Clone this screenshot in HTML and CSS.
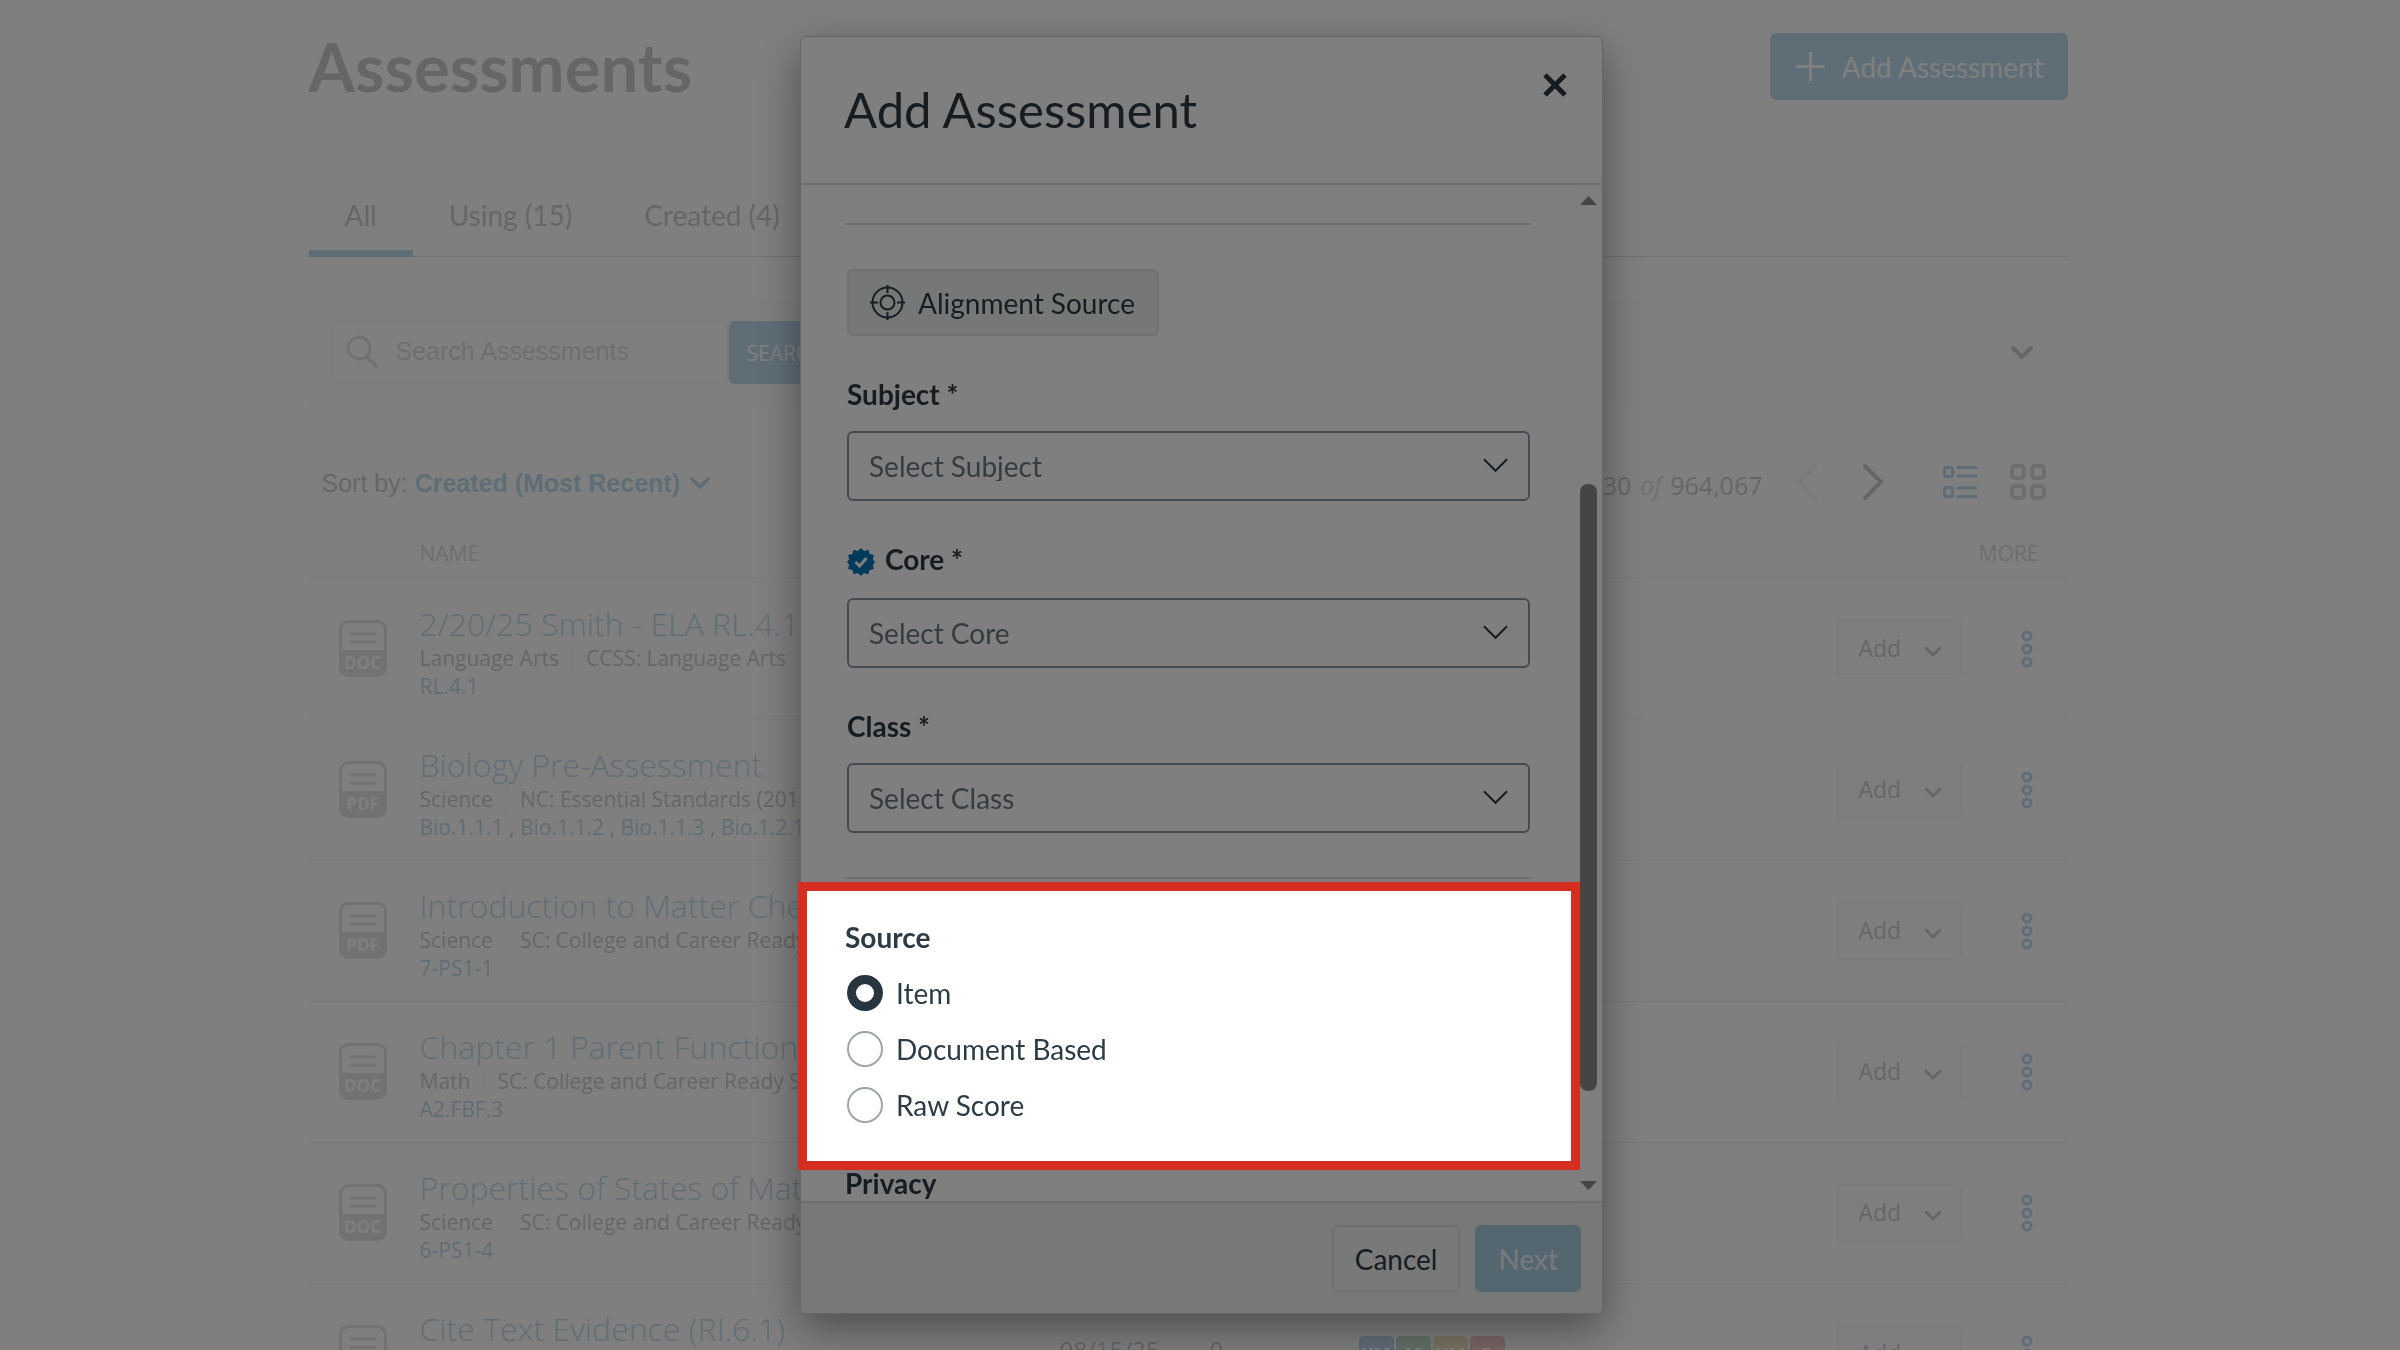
FILE: index.html
```html
<!DOCTYPE html>
<html lang="en">
<head>
<meta charset="utf-8">
<title>Assessments</title>
<link rel="stylesheet" href="styles.css">
</head>
<body>
<svg class="sprite" aria-hidden="true">
  <symbol id="doc" viewBox="0 0 48 57"><rect x="1.5" y="1.5" width="45" height="54" rx="8" fill="none" stroke="#8b9298" stroke-width="3"/><path d="M2 30h44v17a8 8 0 0 1-8 8H10a8 8 0 0 1-8-8z" fill="#8b9298"/><path d="M12 14h24M12 22h24" stroke="#8b9298" stroke-width="3" stroke-linecap="round"/></symbol>
  <symbol id="chev" viewBox="0 0 24 16"><path d="M3 3l9 9 9-9" fill="none" stroke="currentColor" stroke-width="4" stroke-linecap="round" stroke-linejoin="round"/></symbol>
  <symbol id="chev-thin" viewBox="0 0 26 15"><path d="M1 1l12 12L25 1" fill="none" stroke="currentColor" stroke-width="2"/></symbol>
  <symbol id="dots" viewBox="0 0 12 38"><g fill="none" stroke="currentColor" stroke-width="3"><circle cx="6" cy="6" r="4"/><circle cx="6" cy="19" r="4"/><circle cx="6" cy="32" r="4"/></g></symbol>
</svg>

<main class="page">
  <header class="page-head">
    <h1>Assessments</h1>
    <button class="btn-primary" type="button"><svg width="29" height="29" viewBox="0 0 29 29"><path d="M14.500 1v27M1 14.500h27" stroke="currentColor" stroke-width="3" stroke-linecap="round"/></svg>Add Assessment</button>
  </header>

  <nav class="tabs">
    <a class="tab active" href="#all">All</a>
    <a class="tab" href="#using">Using (15)</a>
    <a class="tab" href="#created">Created (4)</a>
  </nav>

  <section class="filter">
    <form class="search">
      <label class="search-box">
        <svg width="33" height="34" viewBox="0 0 33 34"><g fill="none" stroke="currentColor" stroke-width="3" stroke-linecap="round"><circle cx="13" cy="13" r="11"/><path d="M21 22l9 9" stroke-width="4"/></g></svg>
        <input type="text" placeholder="Search Assessments" aria-label="Search Assessments">
      </label>
      <button class="search-btn" type="button">SEARCH</button>
    </form>
    <button class="plain" type="button" aria-label="Expand"><svg width="24" height="16"><use href="#chev"/></svg></button>
  </section>

  <div class="toolbar">
    <div class="sort"><span>Sort by:</span> <button class="plain sort-btn" type="button">Created (Most Recent) <svg width="22" height="15"><use href="#chev"/></svg></button></div>
    <div class="pager">
      <span class="count">30 <em>of</em> 964,067</span>
      <button class="plain prev" type="button" aria-label="Previous"><svg width="22" height="38" viewBox="0 0 22 38"><path d="M20 2L3 19l17 17" fill="none" stroke="currentColor" stroke-width="3" stroke-linecap="round"/></svg></button>
      <button class="plain next" type="button" aria-label="Next page"><svg width="22" height="38" viewBox="0 0 22 38"><path d="M3 3l16 16L3 35" fill="none" stroke="currentColor" stroke-width="4" stroke-linecap="round" stroke-linejoin="round"/></svg></button>
      <button class="plain list" type="button" aria-label="List view"><svg width="36" height="34" viewBox="0 0 36 34"><g fill="none" stroke="currentColor" stroke-width="3" stroke-linecap="round"><rect x="2.500" y="2.500" width="8" height="9" rx="2"/><rect x="2.500" y="22.500" width="8" height="9" rx="2"/><path d="M16 2.500h18M16 11h18M16 23h18M16 31.500h18"/></g></svg></button>
      <button class="plain grid" type="button" aria-label="Grid view"><svg width="36" height="36" viewBox="0 0 36 36"><g fill="none" stroke="currentColor" stroke-width="4"><rect x="2" y="2" width="12" height="12" rx="3"/><rect x="22" y="2" width="12" height="12" rx="3"/><rect x="2" y="22" width="12" height="12" rx="3"/><rect x="22" y="22" width="12" height="12" rx="3"/></g></svg></button>
    </div>
  </div>

  <table class="list-table">
    <colgroup><col class="c-icon"><col class="c-name"><col class="c-date"><col class="c-num"><col class="c-score"><col class="c-add"><col class="c-more"></colgroup>
    <thead><tr><th></th><th>NAME</th><th></th><th></th><th></th><th></th><th>MORE</th></tr></thead>
    <tbody>
      <tr>
        <td class="icon"><span class="doc"><svg width="48" height="57"><use href="#doc"/></svg><b>DOC</b></span></td>
        <td class="name"><a class="title" href="#1">2/20/25 Smith - ELA RL.4.1</a><div class="meta"><span>Language Arts</span><span>CCSS: Language Arts</span></div><div class="std"><a href="#s">RL.4.1</a></div></td>
        <td></td><td></td><td></td>
        <td><button class="add" type="button">Add <svg width="18" height="12"><use href="#chev"/></svg></button></td>
        <td class="more"><button class="plain" type="button" aria-label="More"><svg width="12" height="38"><use href="#dots"/></svg></button></td>
      </tr>
      <tr>
        <td class="icon"><span class="doc"><svg width="48" height="57"><use href="#doc"/></svg><b>PDF</b></span></td>
        <td class="name"><a class="title" href="#2">Biology Pre-Assessment</a><div class="meta"><span>Science</span><span>NC: Essential Standards (2010)</span></div><div class="std"><a href="#s">Bio.1.1.1</a> , <a href="#s">Bio.1.1.2</a> , <a href="#s">Bio.1.1.3</a> , <a href="#s">Bio.1.2.1</a></div></td>
        <td></td><td></td><td></td>
        <td><button class="add" type="button">Add <svg width="18" height="12"><use href="#chev"/></svg></button></td>
        <td class="more"><button class="plain" type="button" aria-label="More"><svg width="12" height="38"><use href="#dots"/></svg></button></td>
      </tr>
      <tr>
        <td class="icon"><span class="doc"><svg width="48" height="57"><use href="#doc"/></svg><b>PDF</b></span></td>
        <td class="name"><a class="title" href="#3">Introduction to Matter Check</a><div class="meta"><span>Science</span><span>SC: College and Career Ready</span></div><div class="std"><a href="#s">7-PS1-1</a></div></td>
        <td></td><td></td><td></td>
        <td><button class="add" type="button">Add <svg width="18" height="12"><use href="#chev"/></svg></button></td>
        <td class="more"><button class="plain" type="button" aria-label="More"><svg width="12" height="38"><use href="#dots"/></svg></button></td>
      </tr>
      <tr>
        <td class="icon"><span class="doc"><svg width="48" height="57"><use href="#doc"/></svg><b>DOC</b></span></td>
        <td class="name"><a class="title" href="#4">Chapter 1 Parent Functions</a><div class="meta"><span>Math</span><span>SC: College and Career Ready Standards</span></div><div class="std"><a href="#s">A2.FBF.3</a></div></td>
        <td></td><td></td><td></td>
        <td><button class="add" type="button">Add <svg width="18" height="12"><use href="#chev"/></svg></button></td>
        <td class="more"><button class="plain" type="button" aria-label="More"><svg width="12" height="38"><use href="#dots"/></svg></button></td>
      </tr>
      <tr>
        <td class="icon"><span class="doc"><svg width="48" height="57"><use href="#doc"/></svg><b>DOC</b></span></td>
        <td class="name"><a class="title" href="#5">Properties of States of Matter</a><div class="meta"><span>Science</span><span>SC: College and Career Ready</span></div><div class="std"><a href="#s">6-PS1-4</a></div></td>
        <td></td><td></td><td></td>
        <td><button class="add" type="button">Add <svg width="18" height="12"><use href="#chev"/></svg></button></td>
        <td class="more"><button class="plain" type="button" aria-label="More"><svg width="12" height="38"><use href="#dots"/></svg></button></td>
      </tr>
      <tr>
        <td class="icon"><span class="doc"><svg width="48" height="57"><use href="#doc"/></svg></span></td>
        <td class="name"><a class="title" href="#6">Cite Text Evidence (RI.6.1)</a></td>
        <td class="num">08/15/25</td><td class="num">0</td>
        <td><div class="scores"><span class="xm">XM</span><span class="m">M</span><span class="nm">NM</span><span class="r">R</span></div></td>
        <td><button class="add" type="button">Add <svg width="18" height="12"><use href="#chev"/></svg></button></td>
        <td class="more"><button class="plain" type="button" aria-label="More"><svg width="12" height="38"><use href="#dots"/></svg></button></td>
      </tr>
    </tbody>
  </table>
</main>

<div class="mask">
  <div class="modal" role="dialog" aria-labelledby="modal-title">
    <header class="modal-head">
      <h2 id="modal-title">Add Assessment</h2>
      <button class="plain close" type="button" aria-label="Close"><svg width="24" height="24" viewBox="0 0 24 24"><path d="M2 2l20 20M22 2L2 22" stroke="currentColor" stroke-width="5"/></svg></button>
    </header>
    <div class="modal-body">
      <form class="fields">
        <hr>
        <button class="align-btn" type="button"><svg width="35" height="35" viewBox="0 0 35 35"><g fill="none" stroke="currentColor" stroke-width="2"><circle cx="17.500" cy="17.500" r="15"/><circle cx="17.500" cy="17.500" r="7"/><path d="M17.500 0v8M17.500 27v8M0 17.500h8M27 17.500h8"/></g></svg>Alignment Source</button>
        <label class="label" for="subject">Subject *</label>
        <div class="select"><select id="subject"><option>Select Subject</option></select><svg width="25" height="15"><use href="#chev-thin"/></svg></div>
        <label class="label core" for="core"><svg width="28" height="28" viewBox="0 0 28 28"><path d="M14 0l3.200 3 4.200-1.200 1.200 4.200 4.300 1-1 4.200L28 14l-2.100 2.800 1 4.200-4.300 1-1.200 4.200-4.200-1.200L14 28l-3.200-3-4.200 1.200-1.200-4.200-4.300-1 1-4.200L0 14l2.100-2.800-1-4.200 4.300-1 1.200-4.200L10.800 3z" fill="#0374b5"/><path d="M8.500 14l4 4 7-8" fill="none" stroke="#fff" stroke-width="3"/></svg><span>Core *</span></label>
        <div class="select"><select id="core"><option>Select Core</option></select><svg width="25" height="15"><use href="#chev-thin"/></svg></div>
        <label class="label" for="class">Class *</label>
        <div class="select"><select id="class"><option>Select Class</option></select><svg width="25" height="15"><use href="#chev-thin"/></svg></div>
        <hr class="divider">
        <fieldset class="source">
          <legend>Source</legend>
          <div class="options">
            <label><input type="radio" name="source" checked>Item</label>
            <label><input type="radio" name="source">Document Based</label>
            <label><input type="radio" name="source">Raw Score</label>
          </div>
        </fieldset>
        <h3 class="privacy">Privacy</h3>
      </form>
      <div class="scrollbar" aria-hidden="true">
        <svg width="17" height="9" viewBox="0 0 17 9"><path d="M8.500 0L17 9H0z" fill="currentColor"/></svg>
        <div class="track"><div class="thumb"></div></div>
        <svg width="17" height="9" viewBox="0 0 17 9"><path d="M0 0h17L8.500 9z" fill="currentColor"/></svg>
      </div>
    </div>
    <footer class="modal-foot">
      <button class="cancel" type="button">Cancel</button>
      <button class="go" type="button">Next</button>
    </footer>
  </div>
</div>
</body>
</html>
```
FILE: styles.css
```css
* { box-sizing: border-box; }
html, body { height: 100%; }
body {
  margin: 0;
  padding-right: 24px;
  overflow: hidden;
  background: #fff;
  color: #2d3b45;
  font: 28px/30px Lato, "Liberation Sans", sans-serif;
}
button, input, select { font: inherit; color: inherit; }
button { margin: 0; padding: 0; cursor: pointer; }
svg { display: block; flex: none; }
.sprite { position: absolute; width: 0; height: 0; }
.plain { display: flex; align-items: center; border: 0; background: none; }
a { color: #0374b5; text-decoration: none; }

/* Page */
.page { max-width: 1759px; margin: 0 auto; padding-top: 33px; }
.page-head { display: flex; align-items: center; justify-content: space-between; height: 67px; }
h1 { margin: 0; padding-bottom: 2px; font-size: 67px; line-height: 64px; font-weight: 700; }
.btn-primary {
  display: flex; align-items: center; gap: 17px;
  height: 67px; padding: 0 24px 0 26px;
  border: 0; border-radius: 6px; background: #0374b5; color: #fff;
}
.tabs { display: flex; margin-top: 100px; border-bottom: 1px solid #8b9298; }
.tab { padding: 0 36px 20px; border-bottom: 7px solid transparent; margin-bottom: -1px; color: #2d3b45; }
.tab.active { border-color: #0374b5; }

.filter {
  display: flex; align-items: center; justify-content: space-between;
  margin-top: 43px; padding: 21px 34px 22px 22px;
  background: #f5f5f5;
}
.search { display: flex; }
.search-box {
  display: flex; align-items: center; gap: 17px;
  width: 398px; height: 63px; padding: 0 16px 2px 13px;
  border: 2px solid #d5d9dc; border-radius: 6px; background: #fff; color: #8b9298;
}
.search-box input {
  flex: 1; min-width: 0; padding: 0; border: 0; background: none;
  font: 25px "Liberation Sans", sans-serif;
}
.search-box input::placeholder { color: #757c82; }
.search-btn {
  height: 63px; padding: 0 18px; border: 0; border-radius: 6px;
  background: #0374b5; color: #fff; font: 21px "Open Sans", sans-serif;
}
.toolbar { display: flex; align-items: center; justify-content: space-between; height: 66px; margin-top: 43px; padding: 0 22px 0 13px; }
.sort { display: flex; align-items: center; gap: 7px; padding-top: 2px; font: 25px "Liberation Sans", sans-serif; }
.sort-btn { gap: 9px; color: #0374b5; font-weight: 700; }
.pager { display: flex; align-items: center; font: 25px "Open Sans", sans-serif; }
.count { padding-top: 6px; }
.count em { margin: 0 2px; color: #8b9298; }
.prev { margin-left: 33px; color: #c7cdd1; }
.next { margin-left: 44px; }
.list { margin-left: 58px; color: #0374b5; }
.grid { margin-left: 32px; color: #6a7883; }

.list-table { width: 100%; border-collapse: collapse; table-layout: fixed; font-family: "Open Sans", sans-serif; }
.c-icon { width: 111px; }
.c-date { width: 150px; }
.c-num { width: 149px; }
.c-score { width: 477px; }
.c-add { width: 142px; }
.c-more { width: 90px; }
th { height: 63px; padding: 14px 0 0; text-align: left; font-size: 21px; font-weight: 400; color: #6a7883; border-bottom: 1px solid #c7cdd1; }
th:last-child { padding-left: 1px; }
td { height: 141px; padding: 0; border-bottom: 1px solid #c7cdd1; }
.icon { padding-left: 30px; }
.doc { display: grid; width: 48px; }
.doc svg, .doc b { grid-area: 1 / 1; }
.doc b { align-self: end; padding-bottom: 3px; text-align: center; color: #fff; font: 700 17px/22px "Open Sans", sans-serif; }
.name { vertical-align: top; padding-top: 25px; white-space: nowrap; font-size: 21px; line-height: 28px; }
.title { display: block; font-size: 32px; line-height: 40px; font-weight: 300; }
.meta { display: flex; }
.meta span + span { margin-left: 13px; padding-left: 13px; border-left: 1px solid #c7cdd1; }
.num { padding-bottom: 8px; font-size: 24px; }
.scores { display: flex; gap: 2px; }
.scores span { width: 35px; height: 36px; border-radius: 5px; color: #fff; font-size: 18px; line-height: 36px; text-align: center; font-weight: 700; }
.xm { background: #1470cc; }
.m { background: #1b8a3c; }
.nm { background: #c79a1e; }
.r { background: #d02a30; }
.add {
  display: flex; align-items: center; justify-content: space-between;
  width: 126px; height: 60px; padding: 0 18px 2px 21px;
  border: 2px solid #d5d9dc; border-radius: 6px; background: #f5f5f5; font-size: 23px;
}
.add svg { margin-top: 8px; }
.more { padding-left: 43px; color: #0374b5; }

/* Dialog */
.mask {
  position: fixed; inset: 0; display: flex; justify-content: center;
  padding: 36px 0 36px 3px; background: rgba(255, 255, 255, .75);
}
.modal {
  display: flex; flex-direction: column; width: 803px;
  border: 1px solid #c7cdd1; border-radius: 6px; background: #fff;
  box-shadow: 0 15px 44px rgba(0, 0, 0, .4);
}
.modal-head {
  display: flex; align-items: flex-start; justify-content: space-between;
  height: 148px; padding: 36px 35px 0 43px; border-bottom: 2px solid #d8dcdf;
}
h2 { margin: 6px 0 0; font-size: 49px; line-height: 60px; font-weight: 400; }
.modal-body { flex: 1; display: flex; justify-content: space-between; }
.fields { flex: 1; margin: 0 44px; padding-top: 38px; }
hr { height: 2px; margin: 0; border: 0; background: #d8dcdf; }
.divider { margin-top: 44px; }
.align-btn {
  display: flex; align-items: center; gap: 13px; height: 67px;
  margin: 44px 0 0 2px; padding: 0 22px 0 21px;
  border: 2px solid #dde3e1; border-radius: 6px; background: #edf1f0;
}
.label { display: flex; align-items: center; margin: 43px 0 22px 2px; font-weight: 700; }
.core { gap: 10px; height: 32px; }
.core svg { margin-top: 4px; }
.core span { padding-bottom: 2px; }
.select { position: relative; margin: 0 1px 0 2px; }
.select select {
  width: 100%; height: 70px; padding: 0 20px; appearance: none;
  border: 2px solid #8d979e; border-radius: 6px; background: #fff; color: #6a7883;
}
.select svg { position: absolute; right: 22px; top: 27px; pointer-events: none; }
.source { position: relative; margin: 43px 0 0; padding: 0; border: 0; }
legend { padding: 0; font-weight: 700; }
.options { display: grid; gap: 20px; padding-top: 23px; }
.options label { display: flex; align-items: center; gap: 13px; height: 36px; padding-left: 2px; }
.options input { width: 36px; height: 36px; margin: 0; appearance: none; border: 2px solid #9ea6ad; border-radius: 50%; background: #fff; }
.options input:checked { border: 9px solid #273540; }
/* Spotlight frame: dims everything outside the source group */
.source::after {
  content: ""; position: absolute; z-index: 1; inset: -70px -49px -47px -47px;
  border: 9px solid #d52d20; box-shadow: 0 0 0 3000px rgba(0, 0, 0, .5); pointer-events: none;
}
.privacy { margin: 45px 0 0; font-size: 28px; line-height: 30px; font-weight: 700; }
.scrollbar { display: flex; flex-direction: column; align-items: center; width: 27px; padding: 11px 0; background: #fcfcfc; color: #8b8b8b; }
.track { flex: 1; width: 17px; padding: 279px 0 90px; }
.thumb { height: 100%; border-radius: 8px; background: #8b8b8b; }
.modal-foot {
  display: flex; justify-content: flex-end; gap: 15px; height: 112px; padding: 22px 21px 0;
  border-top: 2px solid #d8dcdf; border-radius: 0 0 6px 6px; background: #eff3f1;
}
.modal-foot button { height: 67px; padding: 0 21px; border: 2px solid #dbdfe4; border-radius: 6px; background: #f1f4f3; }
.modal-foot .go { border-color: #a8cee1; background: #a8cee1; color: #eef4f7; }
```
